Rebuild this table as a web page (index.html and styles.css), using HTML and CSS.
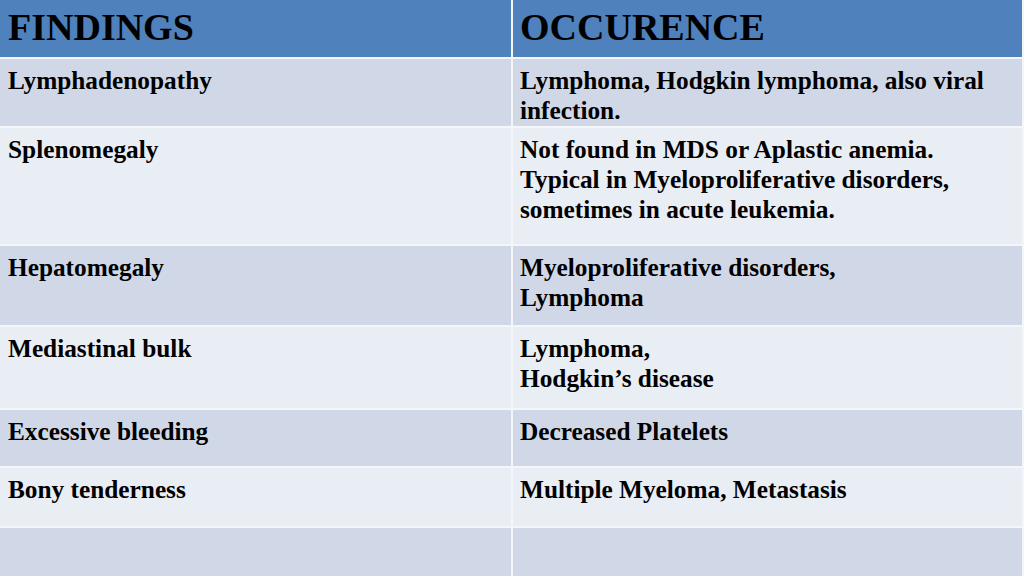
FILE: index.html
```html
<!DOCTYPE html>
<html>
<head>
<meta charset="utf-8">
<link rel="stylesheet" href="styles.css">
</head>
<body>
<div class="table">
  <div class="cell head">FINDINGS</div>
  <div class="cell head">OCCURENCE</div>

  <div class="cell odd">Lymphadenopathy</div>
  <div class="cell odd">Lymphoma, Hodgkin lymphoma, also viral infection.</div>

  <div class="cell even">Splenomegaly</div>
  <div class="cell even">Not found in MDS or Aplastic anemia.<br>Typical in Myeloproliferative disorders, sometimes in acute leukemia.</div>

  <div class="cell odd">Hepatomegaly</div>
  <div class="cell odd">Myeloproliferative disorders,<br>Lymphoma</div>

  <div class="cell even">Mediastinal bulk</div>
  <div class="cell even">Lymphoma,<br>Hodgkin’s disease</div>

  <div class="cell odd">Excessive bleeding</div>
  <div class="cell odd">Decreased Platelets</div>

  <div class="cell even">Bony tenderness</div>
  <div class="cell even">Multiple Myeloma, Metastasis</div>

  <div class="cell odd"></div>
  <div class="cell odd"></div>
</div>
</body>
</html>
```

FILE: styles.css
```css
html, body {
  margin: 0;
  padding: 0;
  width: 1024px;
  height: 576px;
  overflow: hidden;
  background: #f4f6fa;
}

.table {
  display: grid;
  grid-template-columns: 511px 509px;
  grid-template-rows: 57px 67px 116px 79px 81px 56px 58px 48px;
  column-gap: 2px;
  row-gap: 2px;
  width: 1022px;
  height: 576px;
  padding-right: 2px;
  background: #f4f6fa;
  font-family: "Liberation Serif", "Times New Roman", serif;
  font-weight: bold;
  color: #000;
}

.cell {
  box-sizing: border-box;
  padding: 6px 8px 0 8px;
  font-size: 25.3px;
  line-height: 30px;
  overflow: hidden;
}

.cell:nth-child(even) {
  padding-left: 7px;
}

.head {
  background: #4f81bd;
  font-size: 38px;
  line-height: 44px;
  padding-top: 5px;
}

.odd {
  background: #d0d8e8;
}

.even {
  background: #e9edf4;
}
```
